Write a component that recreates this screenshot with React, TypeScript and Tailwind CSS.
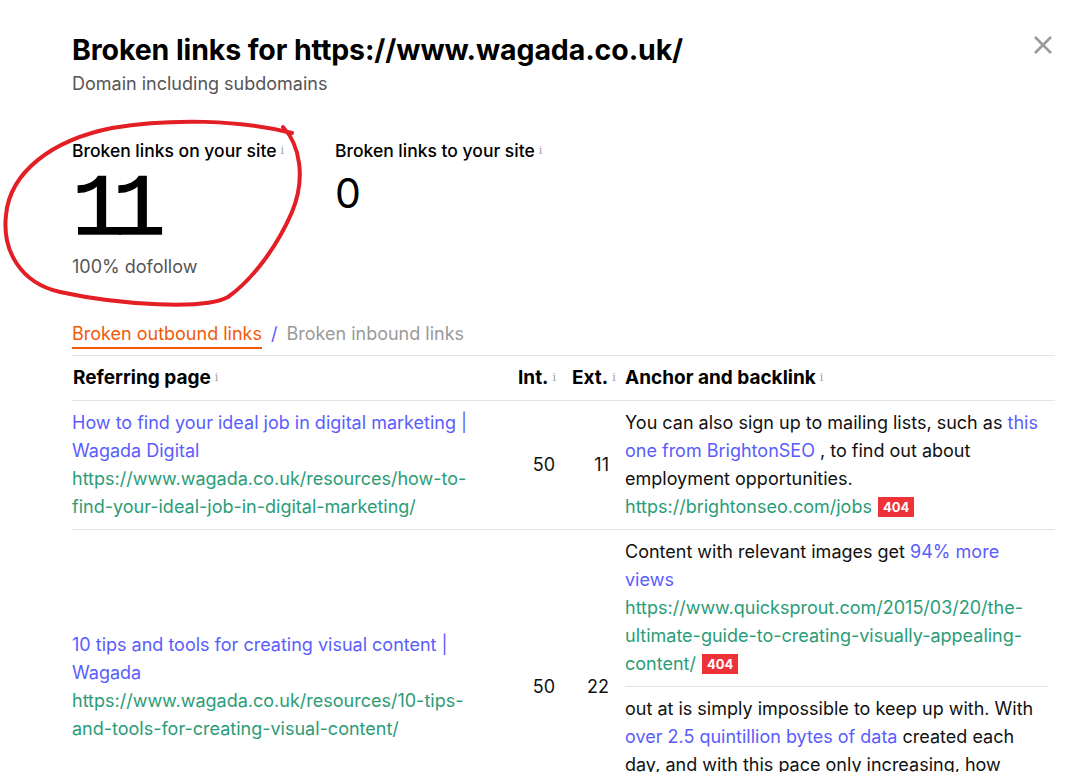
import React from "react";

const I = () => (
  <span className="ml-[4px] align-top text-[11px] font-normal text-[#a0a0a0]" style={{ fontFamily: "'DejaVu Serif', serif" }}>i</span>
);

const Badge = () => (
  <span className="ml-[6px] inline-block bg-[#ee3338] px-[5px] text-[13px] font-bold leading-[20px] text-white align-[1px]">404</span>
);

export default function App() {
  return (
    <div className="relative h-[772px] w-[1076px] overflow-hidden bg-white text-[#111]" style={{ fontFamily: "Inter, 'Noto Sans', sans-serif" }}>
      <svg className="pointer-events-none absolute left-0 top-0 z-10" width="1076" height="772">
        <path
          d="M 283 127 C 300 145, 306 178, 292 212 C 277 247, 252 280, 228 297 C 205 310, 120 305, 60 292 C 20 283, 2 250, 6 215 C 10 172, 52 140, 112 128 C 172 118, 240 120, 292 133"
          fill="none"
          stroke="#e31e24"
          strokeWidth="4"
          strokeLinecap="round"
        />
      </svg>
      <button className="absolute right-[22px] top-[34px] text-[#999]">
        <svg width="22" height="22" viewBox="0 0 22 22">
          <path d="M3 3 L19 19 M19 3 L3 19" stroke="#9a9a9a" strokeWidth="2.6" />
        </svg>
      </button>
      <div className="pl-[72px] pr-[21px] pt-[31px]">
        <h1 className="text-[28.5px] font-bold leading-[38px] tracking-[-0.1px] text-black">Broken links for https://www.wagada.co.uk/</h1>
        <div className="mt-[3px] text-[18px] leading-[24px] text-[#555]">Domain including subdomains</div>

        <div className="mt-[43px] flex">
          <div className="w-[263px]">
            <div className="text-[17.5px] font-medium leading-[24px] text-black">Broken links on your site<I /></div>
            <div className="mt-[5px] text-[88px] leading-[86px] tracking-[-12px] text-black [-webkit-text-stroke:1.5px_black]" style={{ fontFamily: "'Liberation Mono', monospace" }}>11</div>
            <div className="mt-[1px] text-[18px] leading-[24px] text-[#555]">100% dofollow</div>
          </div>
          <div>
            <div className="text-[17.5px] font-medium leading-[24px] text-black">Broken links to your site<I /></div>
            <div className="mt-[6px] text-[41px] leading-[48px] text-black">0</div>
          </div>
        </div>

        <div className="mt-[43px] flex items-end text-[18px] leading-[24px]">
          <span className="border-b-2 border-[#f05a0a] pb-[1px] text-[#f05a0a]">Broken outbound links</span>
          <span className="mx-[9px] pb-[3px] text-[#5a5dfc]">/</span>
          <span className="pb-[3px] text-[#9a9a9a]">Broken inbound links</span>
        </div>

        <div className="mt-[6px] border-t border-[#e5e5e5]">
          <div className="grid grid-cols-[440px_54px_56px_1fr] border-b border-[#e5e5e5] py-[9px] text-[19px] font-bold leading-[26px] text-black">
            <div className="pl-[1px]">Referring page<I /></div>
            <div className="pl-[6px]">Int.<I /></div>
            <div className="pl-[6px]">Ext.<I /></div>
            <div className="pl-[3px]">Anchor and backlink<I /></div>
          </div>

          <div className="grid grid-cols-[440px_54px_56px_1fr] items-center border-b border-[#e5e5e5] text-[18px] leading-[28px]">
            <div className="pr-[20px]">
              <div className="text-[#5a5dfc]">How to find your ideal job in digital marketing | Wagada Digital</div>
              <div className="text-[#2b9c78]">https://www.wagada.co.uk/resources/how-to-find-your-ideal-job-in-digital-marketing/</div>
            </div>
            <div className="pr-[11px] text-right">50</div>
            <div className="pr-[13px] text-right">11</div>
            <div className="py-[8px] pl-[3px] pr-[8px]">
              <div>
                You can also sign up to mailing lists, such as <span className="text-[#5a5dfc]">this one from BrightonSEO</span> , to find out about employment opportunities.
              </div>
              <div className="text-[#2b9c78]">https://brightonseo.com/jobs<Badge /></div>
            </div>
          </div>

          <div className="grid grid-cols-[440px_54px_56px_1fr] items-center text-[18px] leading-[28px]">
            <div className="pr-[20px]">
              <div className="text-[#5a5dfc]">10 tips and tools for creating visual content | Wagada</div>
              <div className="text-[#2b9c78]">https://www.wagada.co.uk/resources/10-tips-and-tools-for-creating-visual-content/</div>
            </div>
            <div className="pr-[11px] text-right">50</div>
            <div className="pr-[13px] text-right">22</div>
            <div className="pl-[3px]">
              <div className="mr-[7px] border-b border-[#e5e5e5] py-[8px] pr-[1px]">
                <div>
                  Content with relevant images get <span className="text-[#5a5dfc]">94% more views</span>
                </div>
                <div className="text-[#2b9c78]">https://www.quicksprout.com/2015/03/20/the-ultimate-guide-to-creating-visually-appealing-content/<Badge /></div>
              </div>
              <div className="py-[8px] pr-[8px]">
                <div>
                  out at is simply impossible to keep up with. With <span className="text-[#5a5dfc]">over 2.5 quintillion bytes of data</span> created each day, and with this pace only increasing, how businesses make their content stand out matters.
                </div>
                <div className="text-[#2b9c78]">https://www.domo.com/data-never-sleeps<Badge /></div>
              </div>
            </div>
          </div>
        </div>
      </div>
    </div>
  );
}
